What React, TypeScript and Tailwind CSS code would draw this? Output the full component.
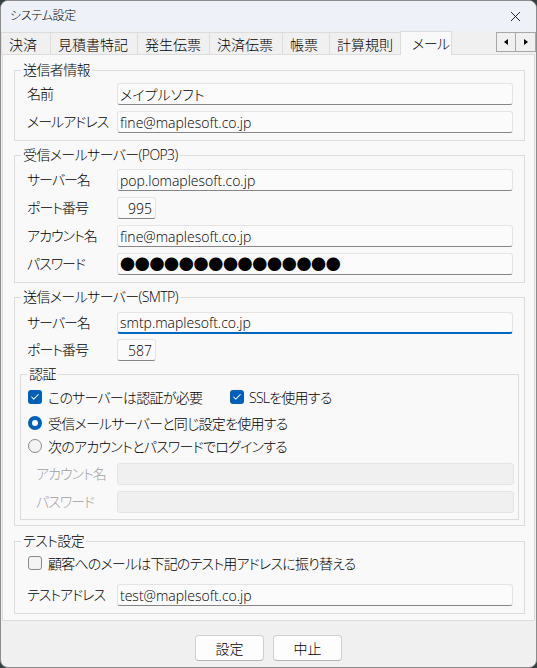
import { X, Check } from 'lucide-react';

// ─── Small controls ──────────────────────────────────────────────────────────

function CheckBox({ checked }: { checked: boolean }) {
  return checked ? (
    <span className="w-[14px] h-[14px] rounded-[3px] bg-[#005fb8] flex items-center justify-center shrink-0">
      <Check size={10} strokeWidth={2.5} className="text-white" />
    </span>
  ) : (
    <span className="w-[14px] h-[14px] rounded-[3px] border border-[#8a8a8a] bg-[#f4f4f4] shrink-0" />
  );
}

function Radio({ checked }: { checked: boolean }) {
  return checked ? (
    <span className="w-[14px] h-[14px] rounded-full bg-[#005fb8] flex items-center justify-center shrink-0">
      <span className="w-[6px] h-[6px] rounded-full bg-white" />
    </span>
  ) : (
    <span className="w-[14px] h-[14px] rounded-full border border-[#8a8a8a] bg-[#f4f4f4] shrink-0" />
  );
}

function Input({
  value,
  narrow,
  focused,
  disabled,
  children,
}: {
  value?: string;
  narrow?: boolean;
  focused?: boolean;
  disabled?: boolean;
  children?: React.ReactNode;
}) {
  let cls =
    "h-[22px] rounded-[3px] border flex items-center text-[14px] text-black tracking-normal overflow-hidden font-['Open_Sans','Noto_Sans_CJK_JP',sans-serif] ";
  cls += narrow ? 'w-[39px] justify-end pr-[3px] ' : 'flex-1 pl-[2px] ';
  if (disabled) cls += 'bg-[#f0f0f0] border-[#e4e4e4]';
  else if (focused) cls += 'bg-[#fbfbfb] border-[#e4e4e4] border-b-2 border-b-[#0067c0]';
  else cls += 'bg-[#fbfbfb] border-[#e4e4e4] border-b-[#868686]';
  return <div className={cls}>{children ?? value}</div>;
}

function Row({
  label,
  children,
  muted,
  indent,
}: {
  label: string;
  children: React.ReactNode;
  muted?: boolean;
  indent?: boolean;
}) {
  return (
    <div className={indent ? 'flex items-center pl-[15px] pr-[4px]' : 'flex items-center pl-[7px] pr-[6px]'}>
      <span
        className={
          (indent ? 'w-[81px] ' : 'w-[90px] ') +
          'text-[14px] leading-[20px] whitespace-nowrap tracking-[-1px] ' +
          (muted ? 'text-[#a0a0a0]' : 'text-black')
        }
      >
        {label}
      </span>
      {children}
    </div>
  );
}

function Legend({ children }: { children: React.ReactNode }) {
  return (
    <legend className="ml-[1px] px-[2px] text-[14px] leading-[18px] text-black tracking-[-0.6px]">
      {children}
    </legend>
  );
}

// ─── Tabs ────────────────────────────────────────────────────────────────────

const TABS = [
  { label: '決済', w: 'w-[50px] border-l' },
  { label: '見積書特記', w: 'w-[87px]' },
  { label: '発生伝票', w: 'w-[72px]' },
  { label: '決済伝票', w: 'w-[73px]' },
  { label: '帳票', w: 'w-[47px]' },
  { label: '計算規則', w: 'w-[71px]' },
];

function TabStrip() {
  return (
    <div className="h-[24px] flex items-end">
      {TABS.map((t) => (
        <div
          key={t.label}
          className={`${t.w} h-[23px] border-t border-r border-[#dcdcdc] bg-[#f0f0f0] flex items-center pl-[7px] text-[14px] text-black whitespace-nowrap`}
        >
          {t.label}
        </div>
      ))}
      <div className="relative z-10 w-[52px] h-[24px] -ml-px border border-b-0 border-[#dcdcdc] bg-[#f9f9f9] flex items-center pl-[11px] text-[14px] text-black tracking-[-0.5px]">
        メール
      </div>

      {/* scroll arrows */}
      <div className="ml-auto mb-[3px] flex">
        <div className="w-[20px] h-[20px] border border-[#a8a8a8] bg-[#f0f0f0] flex items-center justify-center">
          <svg width="4" height="6" viewBox="0 0 4 6">
            <polygon points="4,0 4,6 0,3" fill="#000" />
          </svg>
        </div>
        <div className="w-[20px] h-[20px] border border-l-0 border-[#a8a8a8] bg-[#f0f0f0] flex items-center justify-center">
          <svg width="4" height="6" viewBox="0 0 4 6">
            <polygon points="0,0 0,6 4,3" fill="#000" />
          </svg>
        </div>
      </div>
    </div>
  );
}

// ─── Main ────────────────────────────────────────────────────────────────────

export default function App() {
  return (
    <div className="w-[537px] h-[668px] bg-[#33403f]">
      <div className="h-full rounded-[8px] border border-[#8c8c8c] bg-[#f0f0f0] overflow-hidden flex flex-col font-light font-['Open_Sans','Noto_Sans_CJK_JP',sans-serif] [font-feature-settings:'palt']">
        {/* Title bar */}
        <div className="h-[30px] shrink-0 bg-[#eef2f8] flex items-center pl-[9px]">
          <span className="text-[12px] text-black tracking-[-0.3px]">システム設定</span>
          <X size={17} strokeWidth={1.2} className="ml-auto mr-[12px] text-black" />
        </div>

        <TabStrip />

        {/* Tab page */}
        <div className="-mt-px mx-[1px] border border-[#dcdcdc] bg-[#f9f9f9] pt-[6px] pb-[6px] pl-[11px] pr-[9px]">
          {/* 送信者情報 */}
          <fieldset className="border border-[#dcdcdc] px-[5px]">
            <Legend>送信者情報</Legend>
            <div className="flex flex-col gap-[6px] pt-[4px] pb-[7px]">
              <Row label="名前">
                <Input value="メイプルソフト" />
              </Row>
              <Row label="メールアドレス">
                <Input value="fine@maplesoft.co.jp" />
              </Row>
            </div>
          </fieldset>

          {/* 受信メールサーバー */}
          <fieldset className="mt-[5px] border border-[#dcdcdc] px-[5px]">
            <Legend>受信メールサーバー(POP3)</Legend>
            <div className="flex flex-col gap-[6px] pt-[5px] pb-[7px]">
              <Row label="サーバー名">
                <Input value="pop.lomaplesoft.co.jp" />
              </Row>
              <Row label="ポート番号">
                <Input value="995" narrow />
              </Row>
              <Row label="アカウント名">
                <Input value="fine@maplesoft.co.jp" />
              </Row>
              <Row label="パスワード">
                <Input>
                  <span className="text-[15px] tracking-[-0.3px] [font-feature-settings:normal] font-normal font-['Noto_Sans_CJK_JP',sans-serif]">
                    ●●●●●●●●●●●●●●●
                  </span>
                </Input>
              </Row>
            </div>
          </fieldset>

          {/* 送信メールサーバー */}
          <fieldset className="mt-[5px] border border-[#dcdcdc] px-[5px] pb-[5px]">
            <Legend>送信メールサーバー(SMTP)</Legend>
            <div className="flex flex-col gap-[5px] pt-[6px]">
              <Row label="サーバー名">
                <Input value="smtp.maplesoft.co.jp" focused />
              </Row>
              <Row label="ポート番号">
                <Input value="587" narrow />
              </Row>
            </div>

            <fieldset className="mt-[4px] border border-[#dcdcdc] px-[5px]">
              <Legend>認証</Legend>
              <div className="flex flex-col pt-[4px] pb-[6px] text-[14px] text-black tracking-[-0.75px]">
                <div className="h-[20px] flex items-center pl-[2px]">
                  <CheckBox checked />
                  <span className="ml-[6px] w-[182px]">このサーバーは認証が必要</span>
                  <CheckBox checked />
                  <span className="ml-[5px]">SSLを使用する</span>
                </div>
                <div className="mt-[6px] h-[20px] flex items-center pl-[2px]">
                  <Radio checked />
                  <span className="ml-[6px]">受信メールサーバーと同じ設定を使用する</span>
                </div>
                <div className="mt-[3px] h-[20px] flex items-center pl-[2px]">
                  <Radio checked={false} />
                  <span className="ml-[6px]">次のアカウントとパスワードでログインする</span>
                </div>
                <div className="mt-[7px] flex flex-col gap-[6px] -mx-[5px]">
                  <Row label="アカウント名" muted indent>
                    <Input disabled />
                  </Row>
                  <Row label="パスワード" muted indent>
                    <Input disabled />
                  </Row>
                </div>
              </div>
            </fieldset>
          </fieldset>

          {/* テスト設定 */}
          <fieldset className="mt-[6px] border border-[#dcdcdc] px-[5px]">
            <Legend>テスト設定</Legend>
            <div className="flex flex-col pt-[3px] pb-[7px]">
              <div className="h-[20px] flex items-center pl-[8px] text-[14px] text-black tracking-[-0.8px]">
                <CheckBox checked={false} />
                <span className="ml-[6px]">顧客へのメールは下記のテスト用アドレスに振り替える</span>
              </div>
              <div className="mt-[11px]">
                <Row label="テストアドレス">
                  <Input value="test@maplesoft.co.jp" />
                </Row>
              </div>
            </div>
          </fieldset>
        </div>

        {/* Buttons */}
        <div className="pt-[14px] flex justify-center gap-[9px]">
          <button className="w-[69px] h-[26px] rounded-[4px] border border-[#d0d0d0] border-b-[#b5b5b5] bg-[#fdfdfd] text-[14px] text-black">
            設定
          </button>
          <button className="w-[69px] h-[26px] rounded-[4px] border border-[#d0d0d0] border-b-[#b5b5b5] bg-[#fdfdfd] text-[14px] text-black">
            中止
          </button>
        </div>
      </div>
    </div>
  );
}
